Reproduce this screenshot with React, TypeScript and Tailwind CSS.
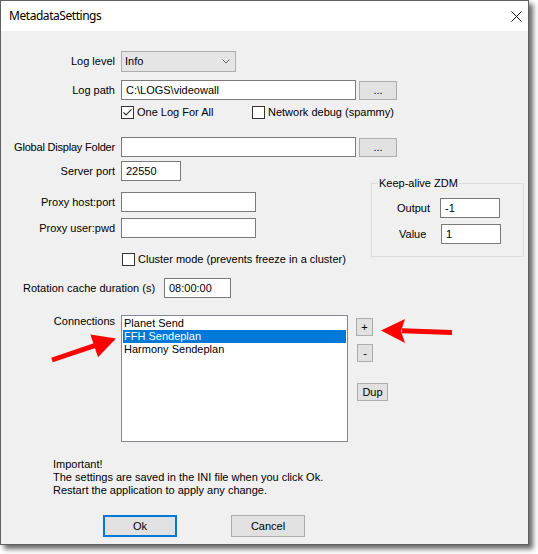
import React from "react";

const TB = "h-[20px] border border-[#7a7a7a] bg-white pl-[4px] flex items-center box-border shrink-0";
const BTN = "border border-[#adadad] bg-[#e1e1e1] flex items-center justify-center box-border shrink-0";
const LBL = "w-[114px] text-right shrink-0";

function Check({ checked }: { checked?: boolean }) {
  return (
    <div className="w-[13px] h-[13px] border border-[#333333] bg-white box-border flex items-center justify-center shrink-0">
      {checked && (
        <svg width="11" height="11" viewBox="0 0 11 11">
          <path d="M1.5 5.5 L4 8 L9.5 2.3" fill="none" stroke="#333333" strokeWidth="1.2" />
        </svg>
      )}
    </div>
  );
}

export default function App() {
  return (
    <div className="w-[538px] h-[554px] bg-white relative font-['Liberation_Sans',Arial,sans-serif] text-[11px] leading-[13px] text-black">
      <div className="w-[529px] h-[545px] border border-[#606060] box-border flex flex-col bg-[#f0f0f0] shadow-[4px_4px_5px_rgba(0,0,0,0.6)]">
        {/* title bar */}
        <div className="h-[30px] bg-white flex items-center pl-[8px] shrink-0">
          <span className="font-['Noto_Sans',sans-serif] text-[12px] leading-[16px] tracking-[-0.45px]">MetadataSettings</span>
          <svg className="ml-auto mr-[6px]" width="11" height="11" viewBox="0 0 11 11">
            <path d="M0.5 0.5 L10.5 10.5 M10.5 0.5 L0.5 10.5" stroke="#111" strokeWidth="1" fill="none" />
          </svg>
        </div>

        {/* body */}
        <div className="flex flex-col">
          {/* Log level */}
          <div className="flex items-center mt-[20px] h-[21px]">
            <div className={LBL}>Log level</div>
            <div className="ml-[6px] w-[115px] h-[21px] border border-[#adadad] bg-[#e5e5e5] box-border flex items-center pl-[3px] pr-[5px]">
              <span>Info</span>
              <svg className="ml-auto" width="8" height="5" viewBox="0 0 8 5">
                <path d="M0.5 0.5 L4 4 L7.5 0.5" fill="none" stroke="#606060" strokeWidth="1" />
              </svg>
            </div>
          </div>

          {/* Log path */}
          <div className="flex items-center mt-[8px] h-[20px]">
            <div className={LBL}>Log path</div>
            <div className={`${TB} ml-[6px] w-[235px]`}>{"C:\\LOGS\\videowall"}</div>
            <div className={`${BTN} ml-[3px] w-[38px] h-[19px]`}>...</div>
          </div>

          {/* checkboxes */}
          <div className="flex items-center mt-[6px] h-[13px] pl-[120px]">
            <div className="flex items-center w-[131px]">
              <Check checked />
              <span className="ml-[3px]">One Log For All</span>
            </div>
            <div className="flex items-center">
              <Check />
              <span className="ml-[3px]">Network debug (spammy)</span>
            </div>
          </div>

          {/* Global display folder */}
          <div className="flex items-center mt-[18px] h-[20px]">
            <div className={`${LBL} tracking-[-0.2px]`}>Global Display Folder</div>
            <div className={`${TB} ml-[6px] w-[235px]`}></div>
            <div className={`${BTN} ml-[3px] w-[38px] h-[19px]`}>...</div>
          </div>

          {/* server / proxy / keep-alive */}
          <div className="flex items-start">
            <div className="w-[370px] flex flex-col shrink-0">
              <div className="flex items-center mt-[4px] h-[20px]">
                <div className={LBL}>Server port</div>
                <div className={`${TB} ml-[6px] w-[60px]`}>22550</div>
              </div>
              <div className="flex items-center mt-[11px] h-[20px]">
                <div className={LBL}>Proxy host:port</div>
                <div className={`${TB} ml-[6px] w-[135px]`}></div>
              </div>
              <div className="flex items-center mt-[6px] h-[20px]">
                <div className={LBL}>Proxy user:pwd</div>
                <div className={`${TB} ml-[6px] w-[135px]`}></div>
              </div>
              <div className="flex items-center mt-[15px] h-[13px] pl-[121px]">
                <Check />
                <span className="ml-[3px]">Cluster mode (prevents freeze in a cluster)</span>
              </div>
            </div>
            <fieldset className="mt-[20px] w-[153px] border border-[#dcdcdc] pb-[12px] box-border">
              <legend className="ml-[6px] px-[1px] leading-[13px]">Keep-alive ZDM</legend>
              <div className="flex items-center mt-[8px]">
                <div className="w-[68px] pl-[25px] shrink-0">Output</div>
                <div className={`${TB} w-[60px]`}>-1</div>
              </div>
              <div className="flex items-center mt-[6px]">
                <div className="w-[69px] pl-[27px] shrink-0">Value</div>
                <div className={`${TB} w-[60px]`}>1</div>
              </div>
            </fieldset>
          </div>

          {/* Rotation cache */}
          <div className="flex items-center mt-[12px] h-[20px]">
            <div className="w-[163px] pl-[22px] shrink-0">Rotation cache duration (s)</div>
            <div className={`${TB} w-[67px]`}>08:00:00</div>
          </div>

          {/* Connections */}
          <div className="flex items-start mt-[17px]">
            <div className={LBL}>Connections</div>
            <div className="ml-[6px] w-[227px] h-[127px] border border-[#828790] bg-white box-border p-[1px] shrink-0">
              <div className="h-[13px] pl-[1px] whitespace-nowrap">Planet Send</div>
              <div className="h-[13px] pl-[1px] bg-[#0078d7] text-white whitespace-nowrap">FFH Sendeplan</div>
              <div className="h-[13px] pl-[1px] whitespace-nowrap">Harmony Sendeplan</div>
            </div>
            <div className="ml-[8px] flex flex-col items-start">
              <div className={`${BTN} mt-[3px] w-[17px] h-[18px]`}>+</div>
              <div className={`${BTN} mt-[8px] ml-[1px] w-[16px] h-[18px]`}>-</div>
              <div className={`${BTN} mt-[21px] ml-[1px] w-[31px] h-[18px]`}>Dup</div>
            </div>
          </div>

          {/* Important text */}
          <div className="mt-[16px] pl-[52px] leading-[13px]">
            <div>Important!</div>
            <div>The settings are saved in the INI file when you click Ok.</div>
            <div>Restart the application to apply any change.</div>
          </div>

          {/* Buttons */}
          <div className="flex mt-[18px] pl-[102px]">
            <div className="w-[74px] h-[22px] border-2 border-[#0078d7] bg-[#e1e1e1] box-border flex items-center justify-center">Ok</div>
            <div className={`${BTN} ml-[54px] w-[74px] h-[22px]`}>Cancel</div>
          </div>
        </div>
      </div>

      {/* red annotation arrows */}
      <svg className="absolute left-0 top-0 pointer-events-none" width="538" height="554" viewBox="0 0 538 554">
        <line x1="52" y1="360" x2="96" y2="345.2" stroke="#ff0000" strokeWidth="5" />
        <polygon points="116,338.5 90.4,334.4 98,357.2" fill="#ff0000" />
        <line x1="452" y1="332.5" x2="402" y2="330.8" stroke="#ff0000" strokeWidth="5" />
        <polygon points="381,330.5 405,319 401,331 405,343" fill="#ff0000" />
      </svg>
    </div>
  );
}
